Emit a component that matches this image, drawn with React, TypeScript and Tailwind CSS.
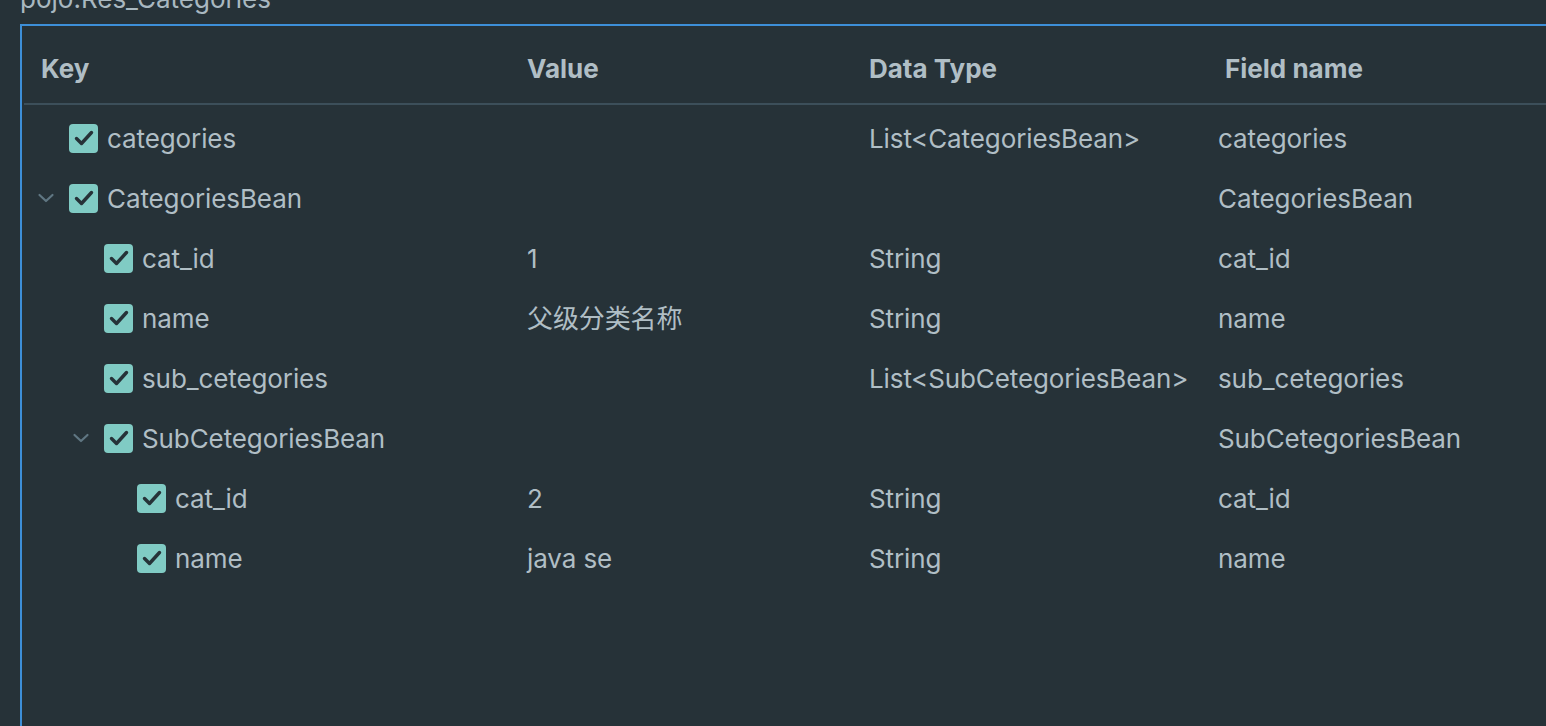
import React from 'react';

type Row = {
  key: string;
  value?: string;
  type?: string;
  field: string;
  level: number;
  expandable?: boolean;
};

const rows: Row[] = [
  { key: 'categories', type: 'List<CategoriesBean>', field: 'categories', level: 0 },
  { key: 'CategoriesBean', field: 'CategoriesBean', level: 0, expandable: true },
  { key: 'cat_id', value: '1', type: 'String', field: 'cat_id', level: 1 },
  { key: 'name', value: '父级分类名称', type: 'String', field: 'name', level: 1 },
  { key: 'sub_cetegories', type: 'List<SubCetegoriesBean>', field: 'sub_cetegories', level: 1 },
  { key: 'SubCetegoriesBean', field: 'SubCetegoriesBean', level: 1, expandable: true },
  { key: 'cat_id', value: '2', type: 'String', field: 'cat_id', level: 2 },
  { key: 'name', value: 'java se', type: 'String', field: 'name', level: 2 },
];

const indent = ['pl-[45px]', 'pl-[80px]', 'pl-[113px]'];

function Check() {
  return (
    <span className="w-[29px] h-[29px] rounded-[4px] bg-[#80cbc4] flex items-center justify-center shrink-0">
      <svg width="20" height="16" viewBox="0 0 20 16" fill="none">
        <path d="M2.5 8.5 L7.5 13.5 L17.5 2.5" stroke="#263238" strokeWidth="3.4" strokeLinecap="round" strokeLinejoin="round" />
      </svg>
    </span>
  );
}

function Chevron() {
  return (
    <svg className="absolute -left-[32px] top-1/2 -translate-y-1/2" width="18" height="11" viewBox="0 0 18 11" fill="none">
      <path d="M2.5 2.5 L9 8.5 L15.5 2.5" stroke="#5f7682" strokeWidth="2.2" strokeLinecap="round" strokeLinejoin="round" />
    </svg>
  );
}

export default function App() {
  return (
    <div className="w-[1546px] h-[726px] bg-[#263238] overflow-hidden flex flex-col text-[#b0bec5] font-['Inter','Noto_Sans_CJK_SC',sans-serif]">
      {/* form title, cut off at the top */}
      <div className="h-[24px] pl-[20px] text-[26px] leading-[30px] -mt-[16px] mb-[16px] text-[#a9b8c0]">pojo.Res_Categories</div>

      <div className="ml-[20px] flex-1 border-l-2 border-t-2 border-[#3d8fd8] pl-[2px]">
        <div className="grid grid-cols-[503px_342px_349px_1fr] h-[79px] pt-[8px] items-center border-b-2 border-[#3c4f5a] text-[26px] font-bold">
          <div className="pl-[17px]">Key</div>
          <div>Value</div>
          <div>Data Type</div>
          <div className="pl-[7px]">Field name</div>
        </div>

        <div className="pt-[3px]">
          {rows.map((r, i) => (
            <div key={i} className="grid grid-cols-[503px_342px_349px_1fr] h-[60px] items-center text-[26px] tracking-[-0.1px]">
              <div className={`${indent[r.level]} flex items-center gap-[9px]`}>
                <span className="relative flex">
                  {r.expandable && <Chevron />}
                  <Check />
                </span>
                <span>{r.key}</span>
              </div>
              <div>{r.value}</div>
              <div>{r.type}</div>
              <div>{r.field}</div>
            </div>
          ))}
        </div>
      </div>
    </div>
  );
}
